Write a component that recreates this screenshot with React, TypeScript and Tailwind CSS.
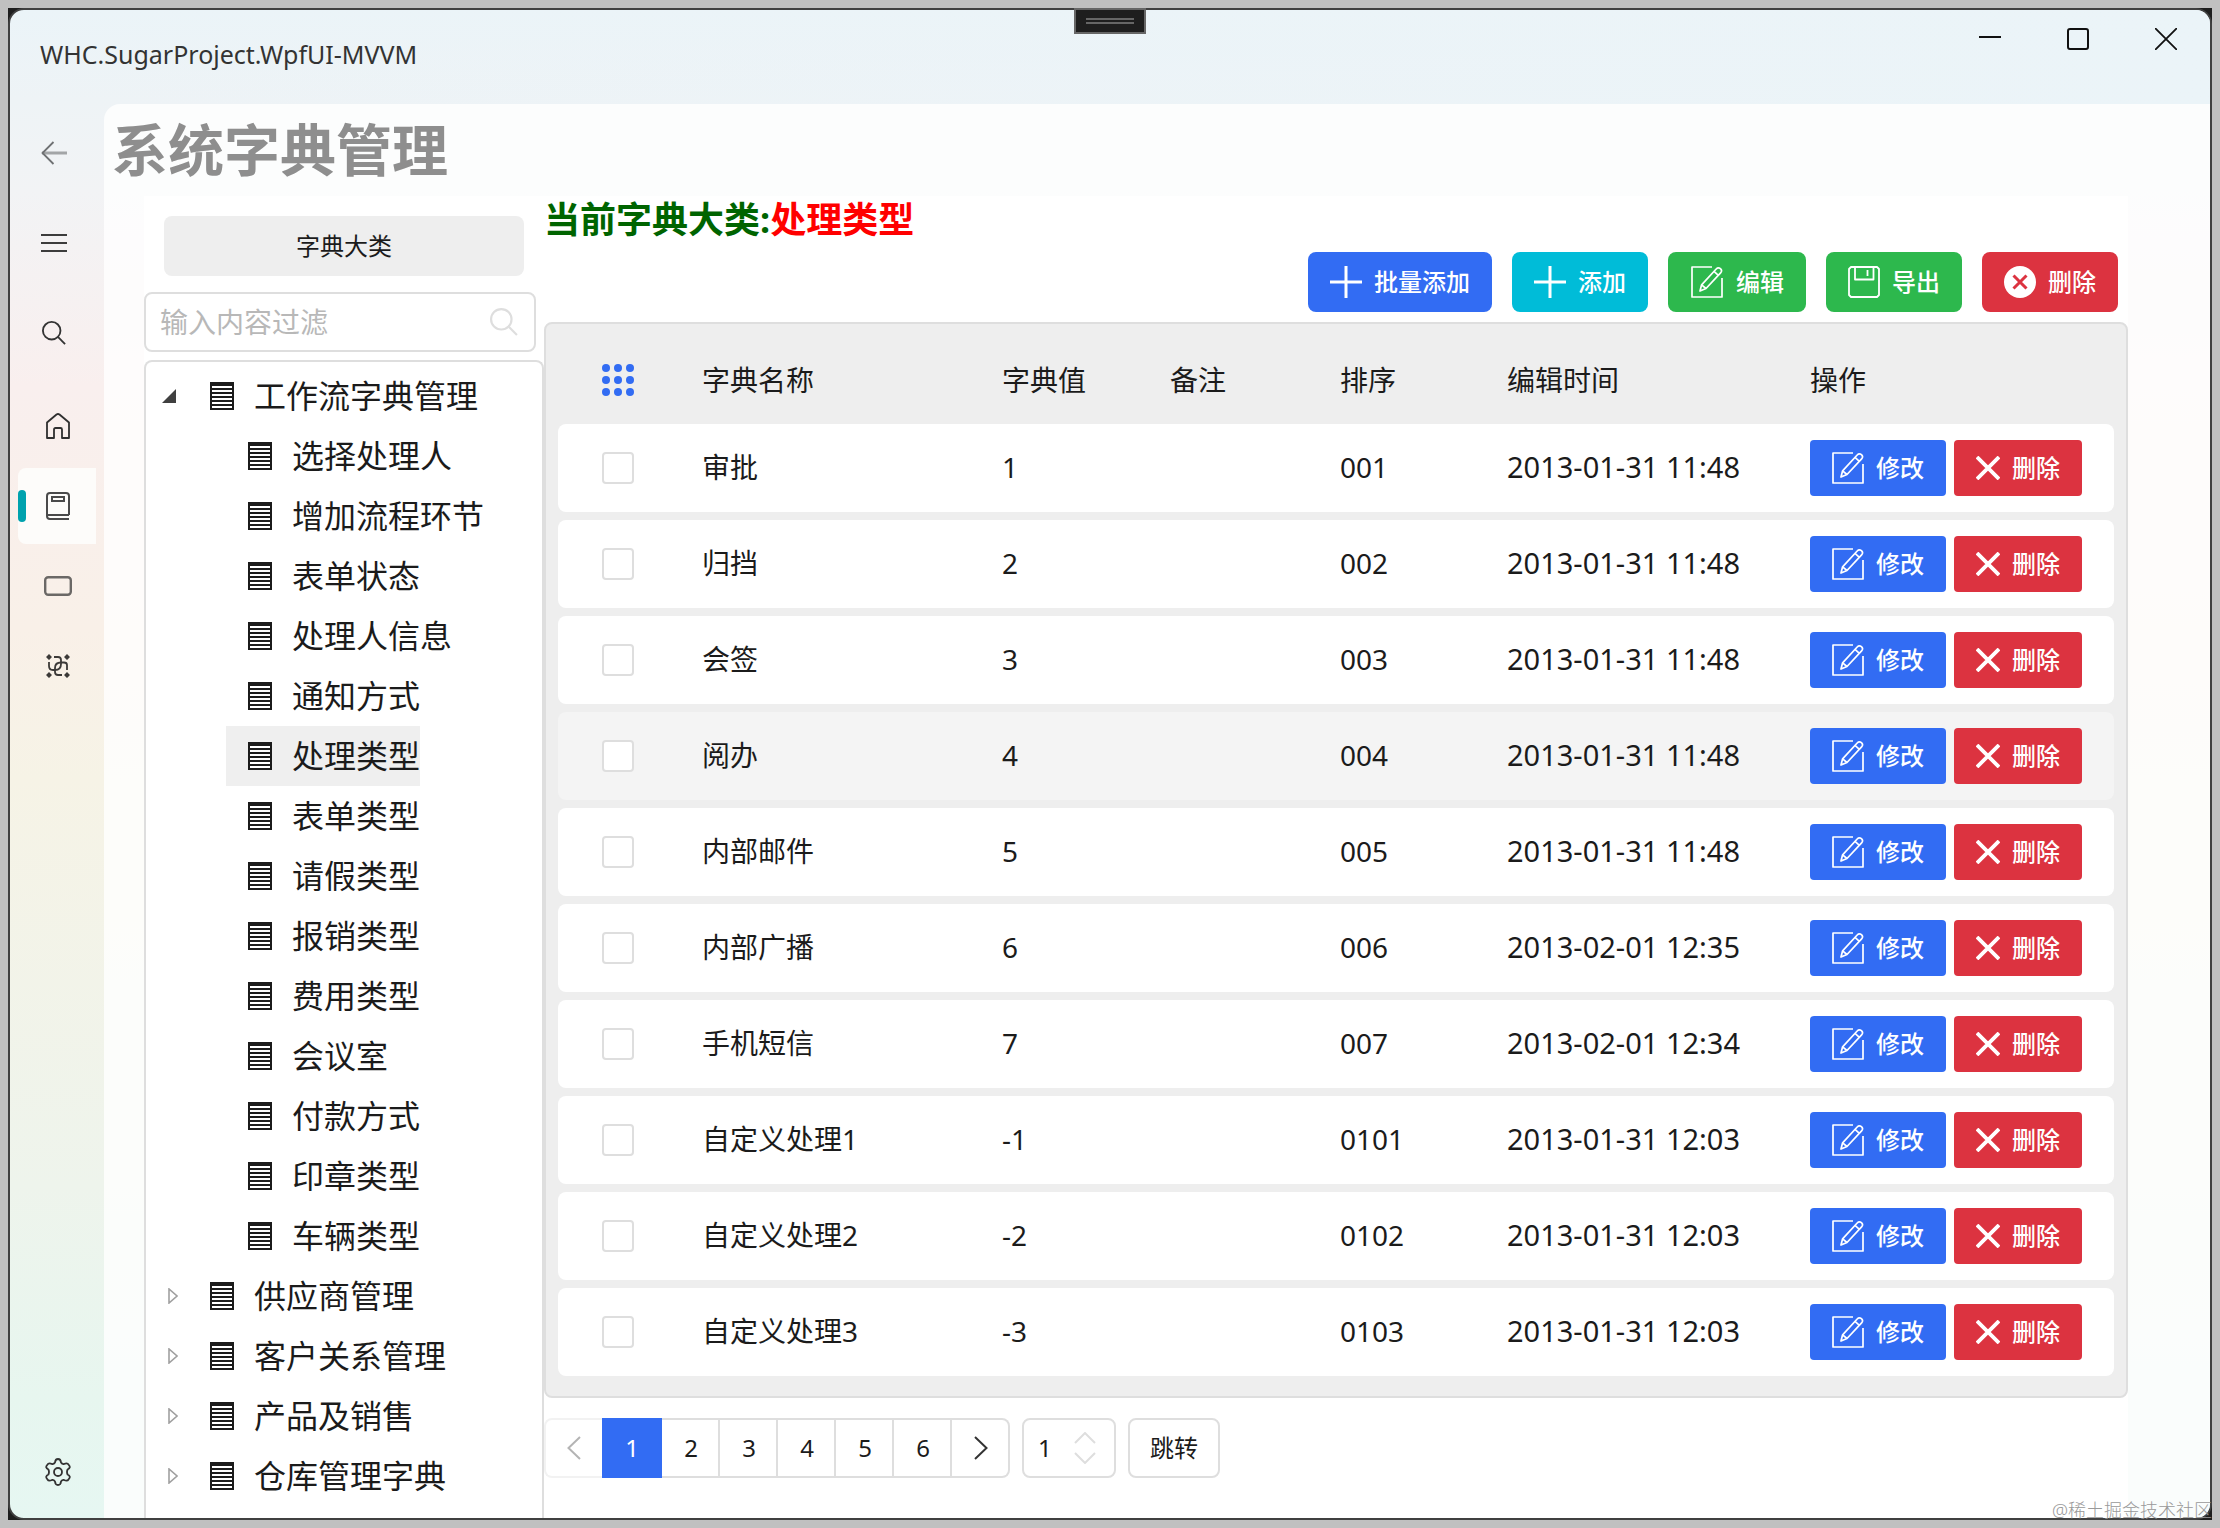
import React from "react";

type IconProps = { className?: string };

const PencilSquare = ({ className = "size-8" }: IconProps) => (
  <svg viewBox="0 0 32 32" className={className} fill="none" stroke="currentColor" strokeWidth="1.7" strokeLinejoin="round" aria-hidden="true">
    <path d="M21 1H1V31H31V12" />
    <path d="M9 25l1.6-6.2L25.2 3c1.2-1.3 3-1.3 4.2-.3 1.3 1.2 1.3 3 .2 4.200L15 22.500z M10.600 18.800l4.400 3.700 M23 5.400l4.400 3.900" />
  </svg>
);

const Plus = () => (
  <svg viewBox="0 0 32 32" className="size-8" fill="none" stroke="currentColor" strokeWidth="3" aria-hidden="true">
    <path d="M16 0V32M0 16H32" />
  </svg>
);

const Floppy = () => (
  <svg viewBox="0 0 32 32" className="size-8" fill="none" stroke="currentColor" strokeWidth="1.8" strokeLinejoin="round" aria-hidden="true">
    <path d="M3 1H29L31 3V29L29 31H3L1 29V3Z" />
    <path d="M7 1V13.500H25.500V1M19.500 4V10" />
  </svg>
);

const CircleCross = () => (
  <svg viewBox="0 0 32 32" className="size-8" aria-hidden="true">
    <circle cx="16" cy="16" r="16" fill="currentColor" />
    <path d="M9.500 9.500L22.500 22.500M22.500 9.500L9.500 22.500" stroke="#dc3340" strokeWidth="3" />
  </svg>
);

const Cross = () => (
  <svg viewBox="0 0 24 24" className="size-6" fill="none" stroke="currentColor" strokeWidth="3.8" aria-hidden="true">
    <path d="M1 1L23 23M23 1L1 23" />
  </svg>
);

const DocLines = () => (
  <svg viewBox="0 0 24 28" className="h-7 w-6 shrink-0" aria-hidden="true">
    <rect width="24" height="28" fill="#1b1b1b" />
    <path d="M2 5H22M2 9H22M2 13H22M2 17H22M2 21H22M2 25H22" stroke="#fff" strokeWidth="2" />
  </svg>
);

const Magnifier = ({ className = "" }: IconProps) => (
  <svg viewBox="0 0 26 26" className={className} fill="none" stroke="currentColor" strokeWidth="2" aria-hidden="true">
    <circle cx="10.500" cy="10.500" r="9.500" />
    <path d="M17 17L25 25" />
  </svg>
);

const BackIcon = () => (
  <svg viewBox="0 0 26 26" className="size-[26px]" fill="none" stroke="#6f7173" strokeWidth="1.8" aria-hidden="true">
    <path d="M26 13H1" stroke="#a3a5a7" strokeWidth="3" />
    <path d="M12.500 2L1.500 13L12.500 24" />
  </svg>
);

const MenuIcon = () => (
  <svg viewBox="0 0 26 26" className="size-[26px]" stroke="#3c3c3c" strokeWidth="2" aria-hidden="true">
    <path d="M0 5H26M0 13H26M0 21H26" />
  </svg>
);

const HomeIcon = () => (
  <svg viewBox="0 0 24 26" className="h-[26px] w-6" fill="none" stroke="#2f2f2f" strokeWidth="1.800" strokeLinejoin="round" aria-hidden="true">
    <path d="M1 25V9.500L10.500 1.500Q12 .5 13.500 1.500L23 9.500V25H16V16.500Q16 15 14.500 15H9.500Q8 15 8 16.500V25Z" />
  </svg>
);

const BookIcon = () => (
  <svg viewBox="0 0 24 28" className="h-7 w-6" fill="none" stroke="#4a4a4a" strokeWidth="2" aria-hidden="true">
    <path d="M23 23V4Q23 1 20 1H4Q1 1 1 4V24Q1 27 4 27H23" />
    <path d="M1 23H23" />
    <path d="M6 5H18V9H6Z" />
  </svg>
);

const RectIcon = () => (
  <svg viewBox="0 0 28 20" className="h-5 w-7" fill="none" stroke="#6b6866" strokeWidth="2.400" aria-hidden="true">
    <rect x="1.200" y="1.200" width="25.600" height="17.600" rx="3" />
  </svg>
);

const GroupIcon = () => (
  <svg viewBox="0 0 24 24" className="size-6" fill="none" stroke="#3c3a38" strokeWidth="1.800" aria-hidden="true">
    <path d="M3 8V12Q3 16 7 16H9Q15 16 15 10V6Q15 3 12 3H8" />
    <path d="M21 16V11Q21 8.500 18 8.500H15Q9 8.500 9 14V18Q9 21 12 21H16" />
    <g fill="#3c3a38" stroke="none">
      <path d="M3 0L6 3L3 6L0 3ZM21 0L24 3L21 6L18 3ZM3 18L6 21L3 24L0 21ZM21 18L24 21L21 24L18 21Z" />
    </g>
  </svg>
);

const GearIcon = () => (
  <svg viewBox="0 0 26 28" className="h-7 w-[26px]" fill="none" stroke="#333" strokeWidth="1.800" strokeLinejoin="round" aria-hidden="true">
    <path d="M10 4.500Q10.300 1 13 1Q15.700 1 16 4.500Q17.200 6.300 19 6Q22.300 4.300 23.700 6.800Q26.400 9.500 22.600 11.500Q21.400 14 22.600 16.500Q26.400 18.500 23.700 21.200Q22.300 23.700 19 22Q17.200 21.700 16 23.500Q15.700 27 13 27Q10.300 27 10 23.500Q8.800 21.700 7 22Q3.700 23.700 2.300 21.200Q-.4 18.500 3.400 16.500Q4.600 14 3.400 11.500Q-.4 9.500 2.300 6.800Q3.700 4.300 7 6Q8.800 6.300 10 4.500Z" />
    <circle cx="13" cy="14" r="4" />
  </svg>
);

const NavButton = ({ label, active = false, children }: { label: string; active?: boolean; children: React.ReactNode }) => (
  <button
    type="button"
    aria-label={label}
    className={
      active
        ? "relative flex h-19 w-[78px] items-center justify-center rounded-l-lg bg-[#fdfcfa] pl-0.5"
        : "flex h-19 w-[78px] items-center justify-center pl-0.5"
    }
  >
    {active && <span className="absolute top-[22px] left-0 h-8 w-2 rounded-full bg-[#00a2ae]" />}
    {children}
  </button>
);

const workflowItems = [
  "选择处理人", "增加流程环节", "表单状态", "处理人信息", "通知方式", "处理类型", "表单类型",
  "请假类型", "报销类型", "费用类型", "会议室", "付款方式", "印章类型", "车辆类型",
];
const collapsed = ["供应商管理", "客户关系管理", "产品及销售", "仓库管理字典"];

const rows = [
  ["审批", "1", "001", "2013-01-31 11:48"],
  ["归挡", "2", "002", "2013-01-31 11:48"],
  ["会签", "3", "003", "2013-01-31 11:48"],
  ["阅办", "4", "004", "2013-01-31 11:48"],
  ["内部邮件", "5", "005", "2013-01-31 11:48"],
  ["内部广播", "6", "006", "2013-02-01 12:35"],
  ["手机短信", "7", "007", "2013-02-01 12:34"],
  ["自定义处理1", "-1", "0101", "2013-01-31 12:03"],
  ["自定义处理2", "-2", "0102", "2013-01-31 12:03"],
  ["自定义处理3", "-3", "0103", "2013-01-31 12:03"],
];

const toolbar = [
  { label: "批量添加", icon: <Plus />, tone: "bg-[#326cf3]" },
  { label: "添加", icon: <Plus />, tone: "bg-[#00bcd8]" },
  { label: "编辑", icon: <PencilSquare className="h-8 w-[34px]" />, tone: "bg-[#2db84d]" },
  { label: "导出", icon: <Floppy />, tone: "bg-[#2db84d]" },
  { label: "删除", icon: <CircleCross />, tone: "bg-[#dc3340]" },
];

function TitleBar() {
  return (
    <header className="flex h-[94px] justify-between bg-linear-to-r from-transparent to-[#ebf4f8]">
      <div className="pt-[26px] pl-[30px] text-[25px] leading-9 text-[#333]">WHC.SugarProject.WpfUI-MVVM</div>
      <div className="flex h-[58px]">
        <button type="button" aria-label="最小化" className="flex w-[88px] items-center justify-center">
          <svg viewBox="0 0 22 22" className="size-[22px]" stroke="#111" strokeWidth="2"><path d="M0 9H22" /></svg>
        </button>
        <button type="button" aria-label="最大化" className="flex w-[88px] items-center justify-center">
          <svg viewBox="0 0 22 22" className="size-[22px]" fill="none" stroke="#111" strokeWidth="2"><rect x="1" y="1" width="20" height="20" rx="2" /></svg>
        </button>
        <button type="button" aria-label="关闭" className="flex w-[88px] items-center justify-center">
          <svg viewBox="0 0 22 22" className="size-[22px]" stroke="#111" strokeWidth="1.800"><path d="M0 0L22 22M22 0L0 22" /></svg>
        </button>
      </div>
    </header>
  );
}

function Sidebar() {
  return (
    <nav className="flex w-[94px] shrink-0 flex-col pb-2 pl-2">
      <div className="flex w-[72px] flex-col gap-[18px] pt-[13px]">
        <button type="button" aria-label="返回" className="flex h-18 items-center justify-center"><BackIcon /></button>
        <button type="button" aria-label="菜单" className="flex h-18 items-center justify-center"><MenuIcon /></button>
        <button type="button" aria-label="搜索" className="flex h-18 items-center justify-center text-[#333]"><Magnifier className="size-6" /></button>
      </div>
      <div className="flex flex-col gap-1 pt-[19px]">
        <NavButton label="主页"><HomeIcon /></NavButton>
        <NavButton label="字典" active><BookIcon /></NavButton>
        <NavButton label="窗口"><RectIcon /></NavButton>
        <NavButton label="分组"><GroupIcon /></NavButton>
      </div>
      <div className="mt-auto">
        <NavButton label="设置"><GearIcon /></NavButton>
      </div>
    </nav>
  );
}

function CategoryPanel() {
  return (
    <section className="flex w-[400px] shrink-0 flex-col">
      <div className="mx-5 mt-5 flex h-[60px] items-center justify-center rounded-lg bg-[#eee] text-2xl">字典大类</div>
      <label className="mt-4 mr-2 flex h-[60px] items-center rounded-lg border-2 border-[#dedede] pr-4 pl-3.5">
        <input aria-label="过滤" placeholder="输入内容过滤" className="min-w-0 flex-1 text-[28px] outline-none placeholder:text-[#b8b8b8]" />
        <Magnifier className="size-7 text-[#dedede]" />
      </label>
      <ul className="mt-2 flex-1 rounded-t-lg border-2 border-b-0 border-[#dedede] pt-1 pb-3 text-[32px] leading-[60px]">
        <li>
          <div className="flex items-center pl-4">
            <svg viewBox="0 0 14 14" className="size-3.5" aria-hidden="true"><path d="M14 0V14H0Z" fill="#404040" /></svg>
            <span className="flex items-center gap-5 pl-[34px]"><DocLines />工作流字典管理</span>
          </div>
          <ul className="pl-20">
            {workflowItems.map((name) => (
              <li key={name} className="flex">
                <span className={name === "处理类型" ? "flex items-center gap-5 bg-[#efefef] pl-[22px]" : "flex items-center gap-5 pl-[22px]"}>
                  <DocLines />{name}
                </span>
              </li>
            ))}
          </ul>
        </li>
        {collapsed.map((name) => (
          <li key={name} className="flex items-center pl-[22px]">
            <svg viewBox="0 0 10 16" className="h-4 w-2.5" fill="none" stroke="#a0a0a0" strokeWidth="1.600" aria-hidden="true"><path d="M1 1V15L9 8Z" /></svg>
            <span className="flex items-center gap-5 pl-8"><DocLines />{name}</span>
          </li>
        ))}
      </ul>
    </section>
  );
}

function DictionaryTable() {
  return (
    <div className="rounded-lg border-2 border-[#dedede] bg-[#eee] px-3 pb-3">
      <table className="w-full table-fixed border-separate border-spacing-x-0 border-spacing-y-2 text-left text-[28px]">
        <colgroup>
          <col className="w-[144px]" />
          <col className="w-[300px]" />
          <col className="w-[168px]" />
          <col className="w-[170px]" />
          <col className="w-[167px]" />
          <col />
          <col className="w-[304px]" />
        </colgroup>
        <thead>
          <tr className="h-[84px] *:pt-3 *:font-normal">
            <th className="pl-11">
              <svg viewBox="0 0 32 32" className="size-8" fill="#326cf3" role="img" aria-label="选择">
                {[4, 16, 28].map((y) => [4, 16, 28].map((x) => <circle key={`${x}-${y}`} cx={x} cy={y} r="4" />))}
              </svg>
            </th>
            <th>字典名称</th>
            <th>字典值</th>
            <th>备注</th>
            <th>排序</th>
            <th>编辑时间</th>
            <th>操作</th>
          </tr>
        </thead>
        <tbody>
          {rows.map(([name, value, order, time], i) => (
            <tr key={order} className={i === 3 ? "h-[88px] *:bg-[#f4f4f4] *:pb-0.5" : "h-[88px] *:bg-white *:pb-0.5"}>
              <td className="rounded-l-lg pt-0.5 pl-11">
                <input type="checkbox" aria-label={name} className="block size-8 appearance-none rounded border-2 border-[#dedede] bg-white checked:bg-[#326cf3]" />
              </td>
              <td>{name}</td>
              <td>{value}</td>
              <td></td>
              <td>{order}</td>
              <td className="text-[29px] whitespace-nowrap">{time}</td>
              <td className="rounded-r-lg pt-0.5">
                <div className="flex gap-2 text-2xl font-medium text-white">
                  <button type="button" className="flex h-14 items-center gap-3 rounded bg-[#326cf3] px-[22px]"><PencilSquare />修改</button>
                  <button type="button" className="flex h-14 items-center gap-3 rounded bg-[#dc3340] px-[22px]"><Cross />删除</button>
                </div>
              </td>
            </tr>
          ))}
        </tbody>
      </table>
    </div>
  );
}

function Pagination() {
  return (
    <div className="mt-5 flex gap-3 text-2xl">
      <div className="flex h-[60px]">
        <button type="button" aria-label="上一页" className="flex w-[58px] items-center justify-center rounded-l-lg border-2 border-r-0 border-[#f2f2f2]">
          <svg viewBox="0 0 14 24" className="h-6 w-3.5" fill="none" stroke="#b4b4b4" strokeWidth="2"><path d="M13 1L1.500 12L13 23" /></svg>
        </button>
        <button type="button" className="w-[60px] bg-[#326cf3] text-white">1</button>
        {["2", "3", "4", "5", "6"].map((n) => (
          <button key={n} type="button" className="w-[58px] border-2 border-l-0 border-[#dedede] pl-0.5">{n}</button>
        ))}
        <button type="button" aria-label="下一页" className="flex w-[58px] items-center justify-center rounded-r-lg border-2 border-l-0 border-[#dedede] pl-0.5">
          <svg viewBox="0 0 14 24" className="h-6 w-3.5" fill="none" stroke="#333" strokeWidth="2"><path d="M1 1L12.500 12L1 23" /></svg>
        </button>
      </div>
      <label className="flex h-[60px] w-[94px] items-center rounded-lg border-2 border-[#dedede] pr-[18px] pl-3.5">
        <input aria-label="页码" defaultValue="1" inputMode="numeric" className="min-w-0 flex-1 outline-none" />
        <svg viewBox="0 0 22 32" className="h-8 w-[22px] shrink-0" fill="none" stroke="#dedede" strokeWidth="2" aria-hidden="true"><path d="M1 11L11 1L21 11M1 21L11 31L21 21" /></svg>
      </label>
      <button type="button" className="h-[60px] rounded-lg border-2 border-[#dedede] px-5">跳转</button>
    </div>
  );
}

export default function App() {
  return (
    <div className="flex min-h-screen bg-[#c0c0c0] p-2 font-['Noto_Sans','Noto_Sans_CJK_SC',sans-serif] text-[#1b1b1b]">
      <div className="relative flex min-w-0 flex-1 bg-[#1e1e1e]">
        <div className="flex min-w-0 flex-1 flex-col overflow-hidden rounded-2xl border-2 border-[#404040] bg-[linear-gradient(180deg,#ebf4f8_0%,#eef3f6_6%,#f2f3f5_12%,#f9efee_25%,#f9f0e8_41%,#f6f3e6_51%,#eef4ec_78%,#e7f6ef_92%,#e6f7f2_100%)]">
          <TitleBar />
          <div className="flex flex-1">
            <Sidebar />
            <main className="flex min-w-0 flex-1 flex-col rounded-tl-2xl bg-white/80">
              <h1 className="h-[92px] pt-1.5 pl-2 text-[56px] leading-[78px] font-bold text-[#8e8e8e]">系统字典管理</h1>
              <div className="mr-[82px] ml-10 flex flex-1 bg-white">
                <CategoryPanel />
                <section className="min-w-0 flex-1">
                  <h2 className="h-14 text-4xl leading-12 font-bold text-[#006400]">
                    当前字典大类:<span className="text-[#ff0000]">处理类型</span>
                  </h2>
                  <div className="flex justify-end gap-5 pr-2.5 pb-2.5 text-2xl font-medium text-white">
                    {toolbar.map(({ label, icon, tone }) => (
                      <button key={label} type="button" className={`flex h-[60px] items-center gap-3 rounded-lg px-[22px] ${tone}`}>
                        {icon}{label}
                      </button>
                    ))}
                  </div>
                  <DictionaryTable />
                  <Pagination />
                </section>
              </div>
            </main>
          </div>
        </div>
        <div className="absolute top-0 left-[1066px] flex h-[26px] w-[72px] flex-col items-center justify-center gap-0.5 border-2 border-[#666] bg-[#1e1e1e]">
          <span className="h-0.5 w-12 bg-[#666]" />
          <span className="h-0.5 w-12 bg-[#666]" />
        </div>
        <div className="absolute right-0 bottom-0 text-lg leading-5 font-light whitespace-nowrap text-[#999]">@稀土掘金技术社区</div>
      </div>
    </div>
  );
}
